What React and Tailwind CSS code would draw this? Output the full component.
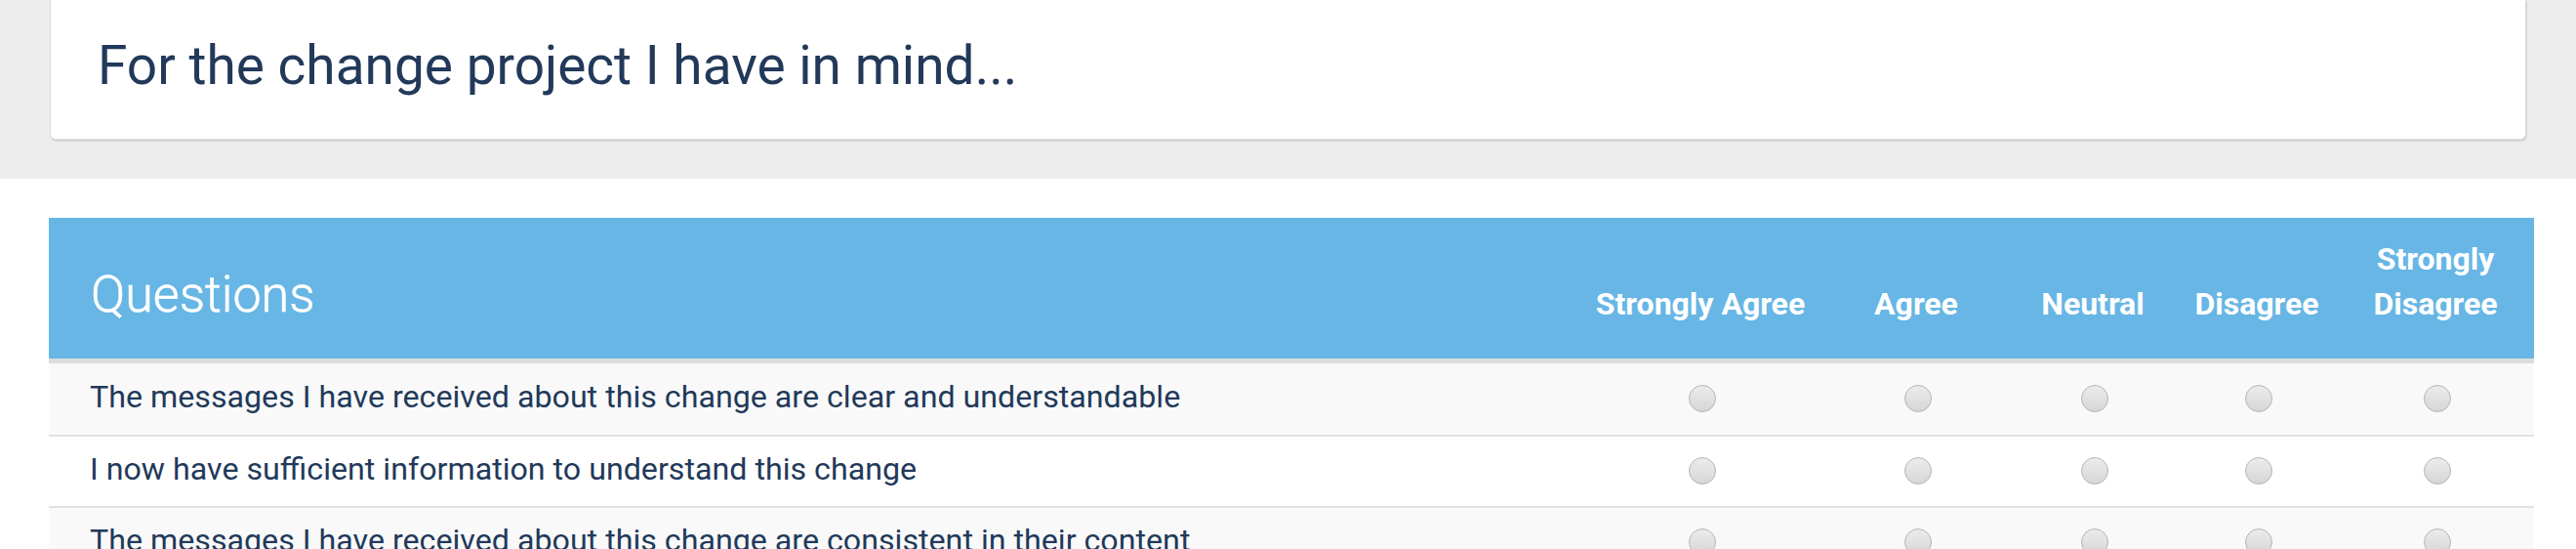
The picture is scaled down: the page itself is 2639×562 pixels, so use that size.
const options = ['Strongly Agree', 'Agree', 'Neutral', 'Disagree', 'Strongly Disagree'];

const questions = [
  'The messages I have received about this change are clear and understandable',
  'I now have sufficient information to understand this change',
  'The messages I have received about this change are consistent in their content',
];

const cols = 'grid grid-cols-[1fr_252px_190px_172px_164px_202px]';

const Radio = () => (
  <span className="block w-[28px] h-[28px] rounded-full border border-[#b5b5b5] bg-gradient-to-b from-[#ececec] to-[#d6d6d6]" />
);

const App = () => {
  return (
    <div className="w-[2639px] h-[562px] overflow-hidden bg-white font-['Roboto',sans-serif]">
      <div className="bg-[#ededed] h-[183px] px-[51px]">
        <div className="h-[143px] bg-white rounded-b-[6px] border border-t-0 border-[#dadada] shadow-[1px_2px_1px_rgba(0,0,0,0.1)] pt-[40px] pl-[48px]">
          <h1 className="text-[55px] leading-none text-[#22395a]">For the change project I have in mind...</h1>
        </div>
      </div>

      <div className="mt-[40px] mx-[50px] w-[2546px]">
        <div className={`${cols} h-[144px] bg-[#67b6e5] border-b-[5px] border-[#dddddd] box-content`}>
          <div className="pl-[43px] pt-[53px] text-[52px] leading-none font-light text-white [-webkit-text-stroke:0.6px_white]">Questions</div>
          {options.map((o) => (
            <div key={o} className="flex items-end justify-center pb-[33px] text-center text-[32px] leading-[46px] font-bold text-white">
              <span className={o === 'Strongly Disagree' ? 'w-[130px]' : ''}>{o}</span>
            </div>
          ))}
        </div>

        {questions.map((q, i) => (
          <div
            key={q}
            className={`${cols} h-[73px] ${i > 0 ? 'border-t-2 border-[#e2e2e2]' : ''} ${i % 2 === 0 ? 'bg-[#f9f9f9]' : 'bg-white'}`}
          >
            <div className="flex items-center pl-[42px] pb-[4px] text-[32.2px] leading-none text-[#22395a]">{q}</div>
            {options.map((o) => (
              <div key={o} className="flex items-center justify-center pb-[2px] pl-[3px]">
                <Radio />
              </div>
            ))}
          </div>
        ))}
      </div>
    </div>
  );
};

export default App;
